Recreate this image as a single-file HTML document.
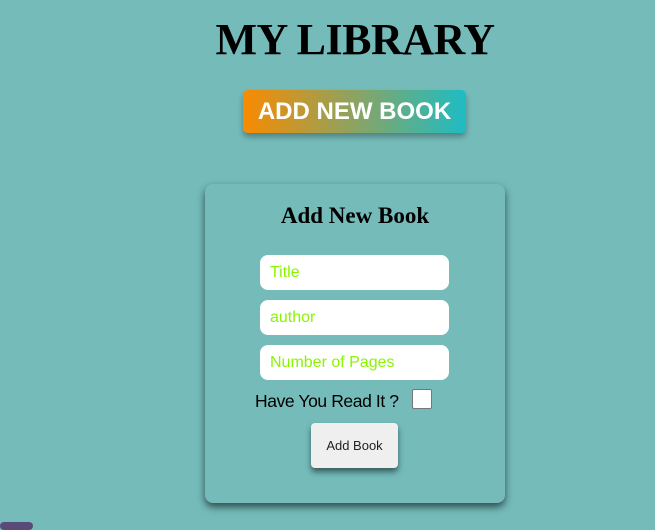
<!DOCTYPE html>
<html><head><style>
body{margin:0;width:655px;height:527px;background:#74bbba;position:relative;overflow:hidden;font-family:"Liberation Sans",sans-serif}
.a{position:absolute}
h1{position:absolute;margin:0;left:0;width:710px;text-align:center;top:14px;font:bold 44px "Liberation Serif",serif;color:#000;letter-spacing:-0.5px}
.btn{left:243px;top:90px;width:223px;height:43px;border-radius:5px;background:linear-gradient(90deg,#f98b00,#1ebcc4);color:#fff;font-weight:bold;font-size:24px;line-height:43px;text-align:center;box-shadow:0 4px 6px rgba(0,0,0,.3)}
.card{left:205px;top:184px;width:300px;height:319px;border-radius:8px;box-shadow:0 4px 8px rgba(0,0,0,.6)}
.h2{left:205px;width:300px;top:203px;text-align:center;font:bold 23px "Liberation Serif",serif}
.in{left:260px;width:189px;height:35px;background:#fff;border-radius:8px;color:#8af500;font-size:16px;line-height:35px;padding-left:10px;box-sizing:border-box}
.lbl{left:255px;top:391px;font-size:17.5px;color:#000;letter-spacing:-0.4px}
.cb{left:412px;top:389px;width:18px;height:18px;background:#fff;border:1px solid #777;border-radius:2px}
.sub{left:311px;top:423px;width:87px;height:45px;background:#efefef;border-radius:4px;font-size:13px;line-height:45px;text-align:center;color:#222;box-shadow:0 4px 6px rgba(0,0,0,.5)}
</style></head><body>
<h1>MY LIBRARY</h1>
<div class="a btn">ADD NEW BOOK</div>
<div class="a card"></div>
<div class="a h2">Add New Book</div>
<div class="a in" style="top:255px">Title</div>
<div class="a in" style="top:300px">author</div>
<div class="a in" style="top:345px">Number of Pages</div>
<div class="a lbl">Have You Read It ?</div>
<div class="a cb"></div>
<div class="a sub">Add Book</div>
<div class="a" style="left:0;top:522px;width:33px;height:8px;background:#5a4a7a;border-radius:4px"></div>
</body></html>
